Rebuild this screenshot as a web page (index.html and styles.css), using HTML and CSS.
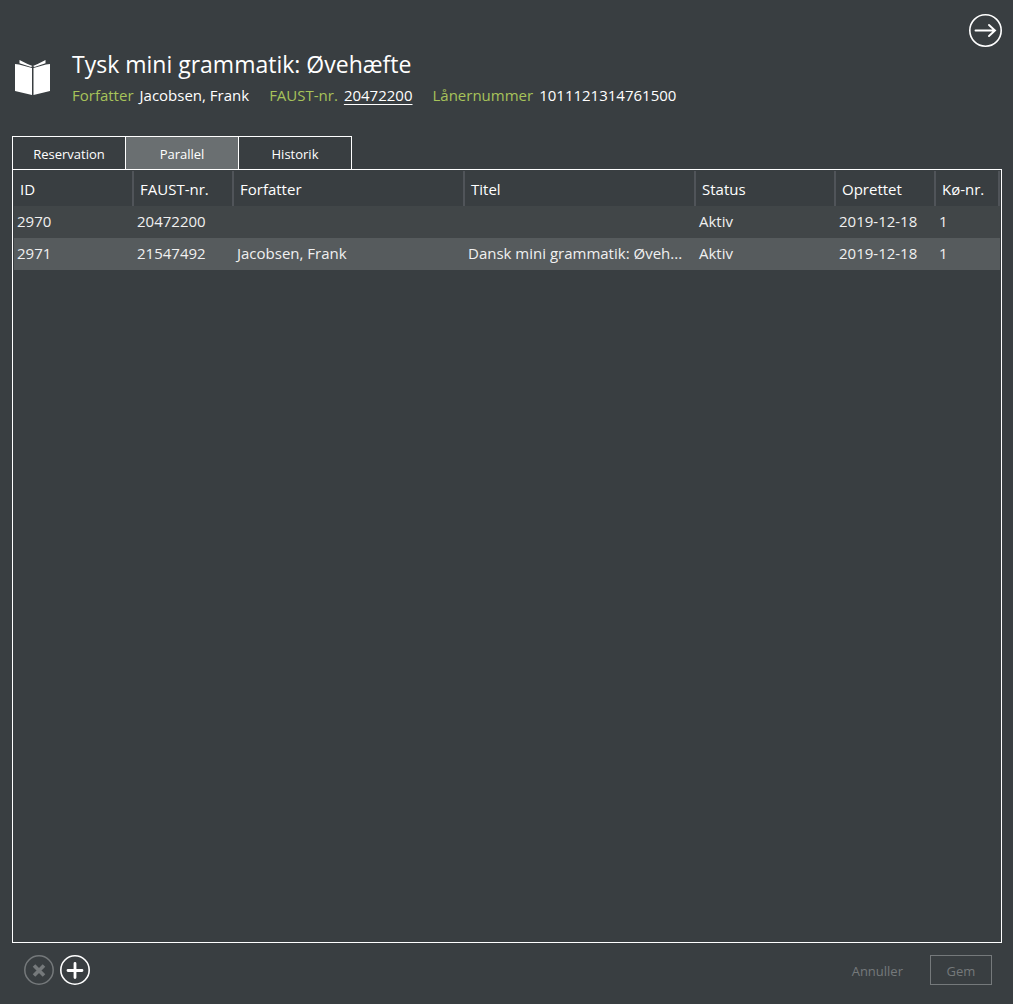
FILE: index.html
```html
<!DOCTYPE html>
<html lang="da">
<head>
<meta charset="utf-8">
<meta name="viewport" content="width=device-width, initial-scale=1">
<title>Tysk mini grammatik: Øvehæfte</title>
<link rel="stylesheet" href="styles.css">
</head>
<body>
<header class="header">
  <svg class="book" viewBox="0 0 36 36" aria-hidden="true">
    <path d="M0 4 4 4.600 17 8V35L0 31Z M18.500 8 31 4.600 35 4V31L18.500 35Z M4.500 0Q12 4 17.500 6L16 7 4.500 3.300Z M30.500 0Q23 4 18 6L19.500 7 30.500 3.300Z" fill="#fff"/>
  </svg>
  <div class="heading">
    <h1 class="title">Tysk mini grammatik: Øvehæfte</h1>
    <dl class="facts">
      <div class="fact"><dt>Forfatter</dt><dd>Jacobsen, Frank</dd></div>
      <div class="fact"><dt>FAUST-nr.</dt><dd><a class="link" href="#">20472200</a></dd></div>
      <div class="fact"><dt>Lånernummer</dt><dd>1011121314761500</dd></div>
    </dl>
  </div>
  <button class="icon-button" type="button" aria-label="Næste">
    <svg width="34" height="34" viewBox="0 0 34 34" fill="none" stroke="#fff" stroke-width="1.600">
      <circle cx="17.500" cy="16.500" r="15.700"/>
      <path d="M7.500 16.500H27M21 11 27 16.500 21 22" stroke-width="1.900" stroke-linecap="round"/>
    </svg>
  </button>
</header>
<main class="main">
  <div class="tabs" role="tablist">
    <button class="tab" type="button" role="tab" aria-selected="false">Reservation</button>
    <button class="tab tab-active" type="button" role="tab" aria-selected="true">Parallel</button>
    <button class="tab" type="button" role="tab" aria-selected="false">Historik</button>
  </div>
  <section class="panel">
    <table class="grid">
      <colgroup>
        <col class="col-id"><col class="col-medium"><col><col><col class="col-status"><col class="col-medium"><col class="col-queue">
      </colgroup>
      <thead>
        <tr><th>ID</th><th>FAUST-nr.</th><th>Forfatter</th><th>Titel</th><th>Status</th><th>Oprettet</th><th>Kø-nr.</th></tr>
      </thead>
      <tbody>
        <tr><td>2970</td><td>20472200</td><td></td><td></td><td>Aktiv</td><td>2019-12-18</td><td>1</td></tr>
        <tr><td>2971</td><td>21547492</td><td>Jacobsen, Frank</td><td>Dansk mini grammatik: Øveh...</td><td>Aktiv</td><td>2019-12-18</td><td>1</td></tr>
      </tbody>
    </table>
  </section>
</main>
<footer class="footer">
  <button class="icon-button" type="button" aria-label="Slet" disabled>
    <svg width="30" height="30" viewBox="0 0 30 30" fill="none" stroke="#75797b">
      <circle cx="15" cy="15" r="14.200" stroke-width="1.500"/>
      <path d="M10 10.500 20 20.500M20 10.500 10 20.500" stroke-width="3.600"/>
    </svg>
  </button>
  <button class="icon-button" type="button" aria-label="Tilføj">
    <svg width="30" height="30" viewBox="0 0 30 30" fill="none" stroke="#fff">
      <circle cx="15" cy="15" r="14.200" stroke-width="1.600"/>
      <path d="M8 15.500H22M15 8.500V22.500" stroke-width="2.800" stroke-linecap="round"/>
    </svg>
  </button>
  <div class="actions">
    <button class="text-button" type="button" disabled>Annuller</button>
    <button class="text-button outlined" type="button" disabled>Gem</button>
  </div>
</footer>
</body>
</html>
```
FILE: styles.css
```css
* {
  box-sizing: border-box;
}

body {
  margin: 0;
  min-height: 100vh;
  display: flex;
  flex-direction: column;
  background: #393e41;
  color: #fff;
  font-family: "Open Sans", "Noto Sans", sans-serif;
  font-size: 15px;
  line-height: 20px;
}

button {
  font: inherit;
  color: inherit;
  background: none;
  border: 0;
  padding: 0;
}

.header {
  display: flex;
  align-items: flex-start;
  padding: 14px 11px 28px 15px;
}

.book {
  width: 36px;
  height: 36px;
  margin-top: 46px;
}

.heading {
  flex: 1;
  margin: 33px 0 0 21px;
}

.title {
  margin: 0;
  font-size: 23px;
  font-weight: 400;
  line-height: 34px;
}

.facts {
  display: flex;
  flex-wrap: wrap;
  gap: 20px;
  margin: 4px 0 3px;
}

.fact {
  display: flex;
  gap: 6px;
}

.fact dt {
  color: #a7c35a;
}

.fact dd {
  margin: 0;
}

.link {
  color: inherit;
  text-decoration: underline;
  text-underline-offset: 3px;
}

.icon-button {
  display: block;
}

.icon-button svg {
  display: block;
}

.main {
  flex: 1;
  display: flex;
  flex-direction: column;
  padding: 0 11px 0 12px;
}

.tabs {
  display: flex;
}

.tab {
  width: 114px;
  height: 33px;
  border: 1px solid #fff;
  border-bottom: 0;
  font-size: 13px;
  padding-top: 2px;
}

.tab + .tab {
  margin-left: -1px;
}

.tab-active {
  background: #6a6f71;
}

.panel {
  flex: 1;
  border: 1px solid #fff;
  padding: 1px;
}

.grid {
  width: 100%;
  table-layout: fixed;
  border-collapse: separate;
  border-spacing: 0;
}

.col-id {
  width: 120px;
}

.col-medium {
  width: 100px;
}

.col-status {
  width: 140px;
}

.col-queue {
  width: 64px;
}

.grid th {
  height: 35px;
  padding: 1px 0 0 6px;
  border-right: 2px solid #505459;
  font-weight: 400;
  text-align: left;
}

.grid td {
  height: 32px;
  padding: 0 3px 2px;
  background: #414648;
  color: #f0f0f0;
  white-space: nowrap;
}

.grid tbody tr:nth-child(even) td {
  background: #565b5d;
}

.footer {
  display: flex;
  gap: 6px;
  align-items: center;
  padding: 12px 21px 19px 24px;
}

.actions {
  display: flex;
  margin-left: auto;
  color: #75797b;
  font-size: 13px;
}

.text-button {
  height: 30px;
  padding: 2px 27px 0;
}

.outlined {
  width: 62px;
  padding: 2px 0 0;
  border: 1px solid #75797b;
}
```
